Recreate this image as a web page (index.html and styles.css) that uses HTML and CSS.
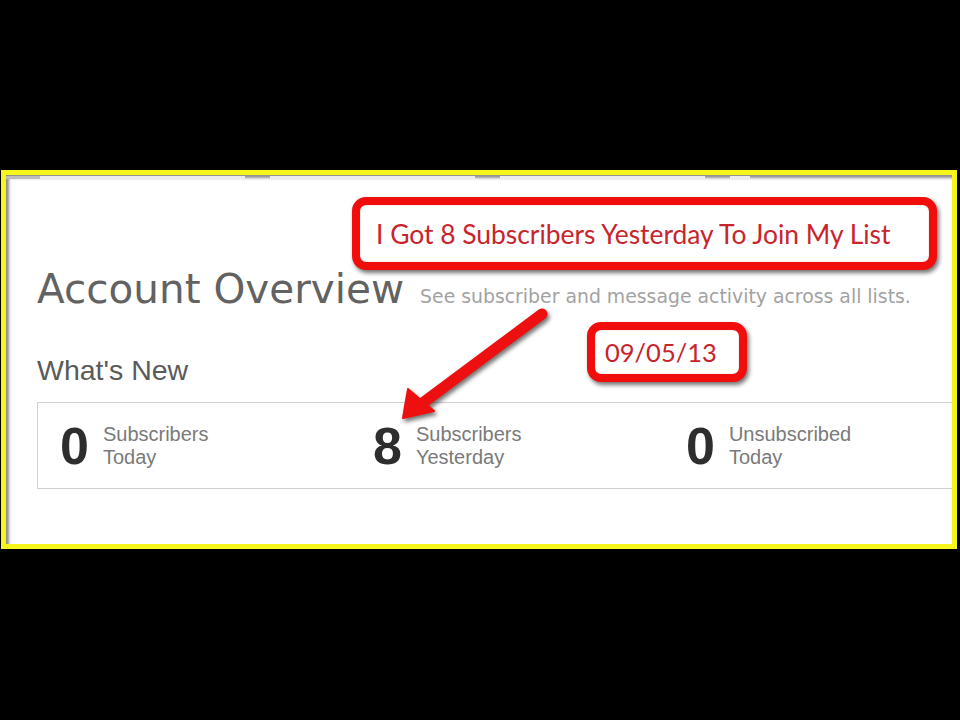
FILE: index.html
```html
<!DOCTYPE html>
<html lang="en">
<head>
<meta charset="utf-8">
<title>Account Overview</title>
<link rel="stylesheet" href="styles.css">
</head>
<body>
<div class="screen">
  <div class="frame">
    <div class="tabs">
      <span class="tab first"></span>
      <span class="tab"></span>
      <span class="tab"></span>
      <span class="tab"></span>
      <span class="tab last"></span>
    </div>
    <div class="content">
      <div class="page-head">
        <h1 class="title">Account Overview</h1>
        <p class="subtitle">See subscriber and message activity across all lists.</p>
      </div>
      <h2 class="section">What's New</h2>
      <div class="stats">
        <div class="stat">
          <span class="num">0</span>
          <span class="label">Subscribers<br>Today</span>
        </div>
        <div class="stat">
          <span class="num">8</span>
          <span class="label">Subscribers<br>Yesterday</span>
        </div>
        <div class="stat">
          <span class="num">0</span>
          <span class="label">Unsubscribed<br>Today</span>
        </div>
      </div>
    </div>
  </div>

  <div class="callout callout-main">I Got 8 Subscribers Yesterday To Join My List</div>
  <div class="callout callout-date">09/05/13</div>

  <svg class="arrow" width="960" height="720" viewBox="0 0 960 720" aria-hidden="true">
    <line x1="542" y1="314" x2="424" y2="402" stroke="#ee1010" stroke-width="11" stroke-linecap="round"/>
    <polygon points="403,418 408,389 434,411" fill="#ee1010" stroke="#ee1010" stroke-width="2" stroke-linejoin="round"/>
  </svg>
</div>
</body>
</html>
```
FILE: styles.css
```css
html, body {
  margin: 0;
  padding: 0;
  background: #000;
}

.screen {
  position: relative;
  width: 960px;
  height: 720px;
  padding-top: 170px;
  box-sizing: border-box;
  background: #000;
}

.frame {
  margin-left: 1px;
  width: 956px;
  height: 379px;
  box-sizing: border-box;
  border: 5px solid #f6f61c;
  background: #fff;
  box-shadow: inset 3px 3px 3px rgba(0, 0, 0, 0.45);
  overflow: hidden;
  position: relative;
}

.tabs {
  display: flex;
  height: 3px;
  margin-top: 1px;
}

.tab {
  width: 205px;
  margin-right: 25px;
  background: #ececec;
}

.tab.first {
  width: 34px;
  background: #bdbdbd;
  margin-right: 0;
}

.tab.last {
  width: 20px;
  margin-right: 0;
}

.content {
  padding: 86px 0 0 31px;
}

.page-head {
  display: flex;
  align-items: baseline;
  gap: 16px;
}

.title {
  margin: 0;
  font-family: "DejaVu Sans", Verdana, sans-serif;
  font-weight: normal;
  font-size: 40.5px;
  line-height: 48px;
  color: #626262;
}

.subtitle {
  margin: 0;
  font-family: "DejaVu Sans", Verdana, sans-serif;
  font-size: 18.85px;
  color: #a2a2a2;
}

.section {
  margin: 41px 0 16px;
  font-family: "Liberation Sans", Arial, sans-serif;
  font-weight: normal;
  font-size: 28.5px;
  line-height: 32px;
  color: #5a5a5a;
}

.stats {
  display: grid;
  grid-template-columns: 313px 313px 313px;
  align-items: center;
  height: 85px;
  padding-left: 22px;
  border: 1px solid #d0d0d0;
  margin-right: -40px;
}

.stat {
  display: flex;
  align-items: center;
  gap: 14px;
}

.num {
  font-family: "Liberation Sans", Arial, sans-serif;
  font-weight: bold;
  font-size: 52px;
  line-height: 52px;
  color: #2e2e2e;
}

.label {
  font-family: "Liberation Sans", Arial, sans-serif;
  font-size: 20px;
  line-height: 23px;
  color: #7a7a7a;
}

.callout {
  position: absolute;
  box-sizing: border-box;
  display: flex;
  align-items: center;
  background: #fff;
  border: 8px solid #f20d0d;
  border-radius: 14px;
  box-shadow: 2px 3px 4px rgba(0, 0, 0, 0.55), inset 0 0 1px rgba(150, 0, 0, 0.6);
  font-family: "Lato", "Open Sans", sans-serif;
  color: #c8242c;
}

.callout-main {
  left: 352px;
  top: 197px;
  width: 585px;
  height: 73px;
  padding-left: 16px;
  font-size: 26.4px;
}

.callout-date {
  left: 587px;
  top: 322px;
  width: 160px;
  height: 60px;
  padding-left: 10px;
  font-size: 25.5px;
}

.arrow {
  position: absolute;
  left: 0;
  top: 0;
  pointer-events: none;
  filter: drop-shadow(2px 3px 2px rgba(0, 0, 0, 0.55));
}
```
